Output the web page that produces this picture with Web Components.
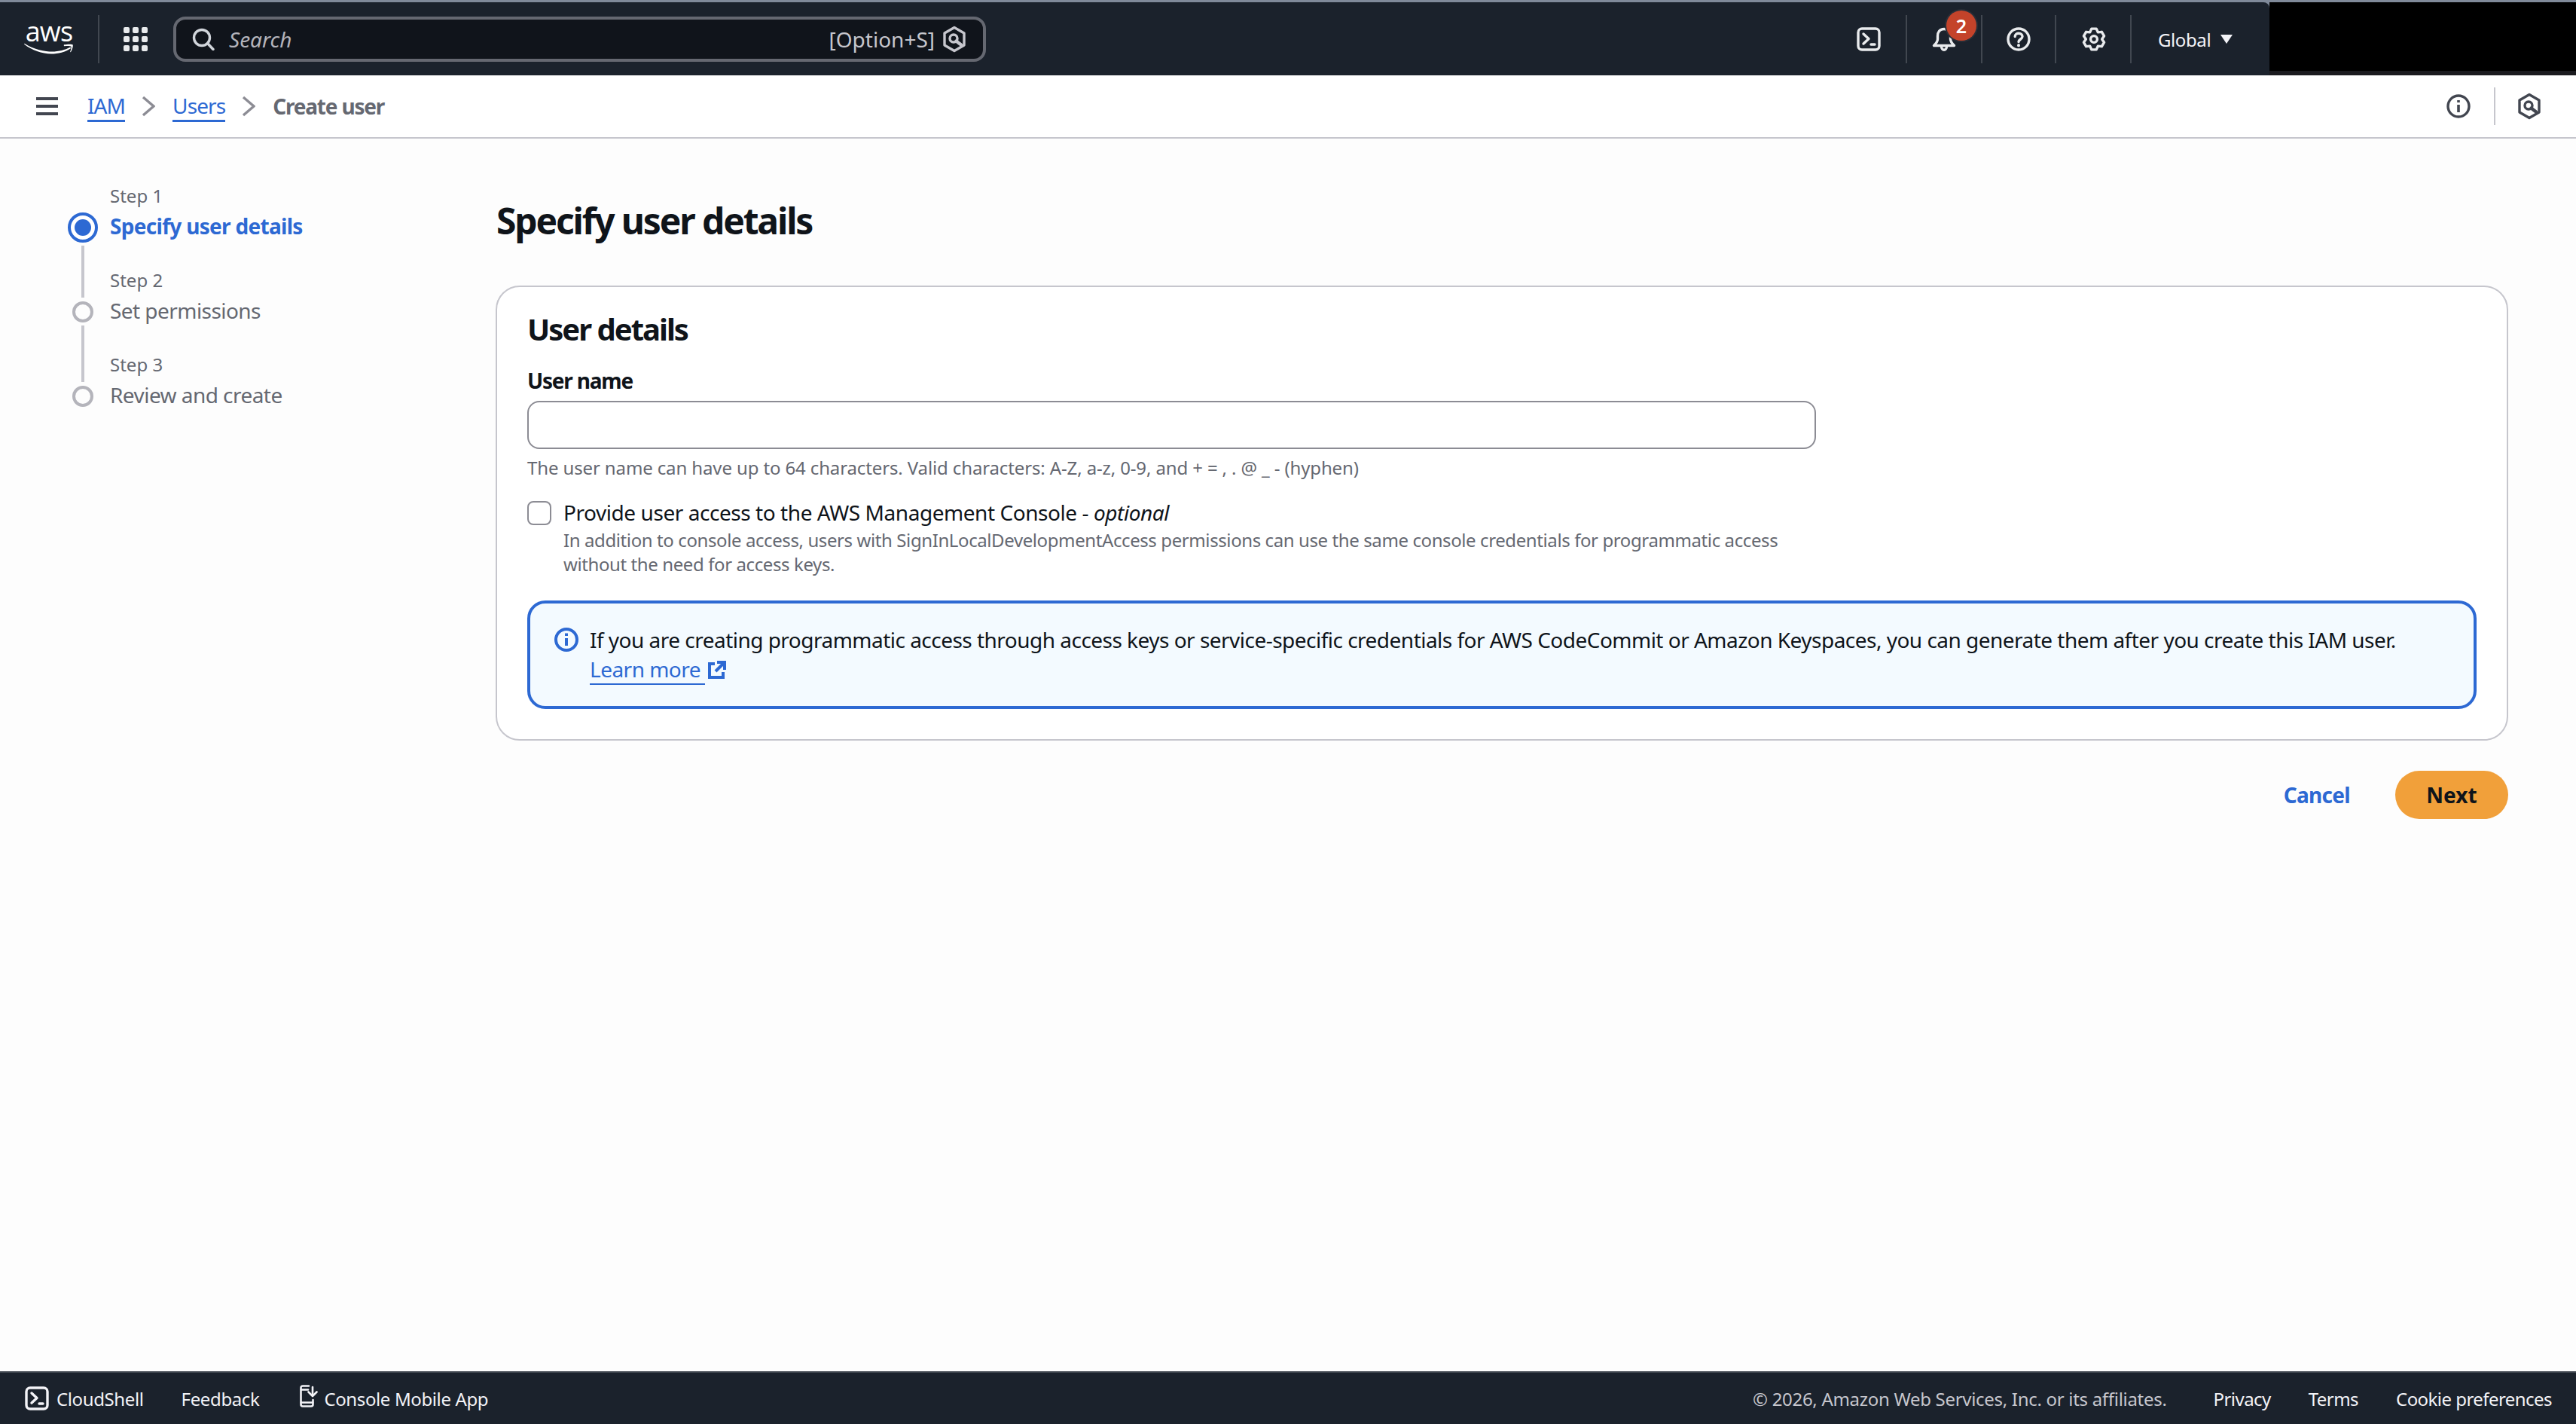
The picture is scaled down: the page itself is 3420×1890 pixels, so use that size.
<!DOCTYPE html>
<html lang="en">
<head>
<meta charset="utf-8">
<title>Create user</title>
<style>
  html, body { margin: 0; height: 100%; }
  body { width: 3420px; height: 1890px; overflow: hidden; display: flex; flex-direction: column; font-family: "Noto Sans", "Open Sans", sans-serif; color: #0f141a; background: #fdfdfd; }
</style>
</head>
<body>
<aws-topbar></aws-topbar>
<aws-subbar></aws-subbar>
<aws-page>
  <aws-steps slot="nav"></aws-steps>
  <aws-title>Specify user details</aws-title>
  <aws-card heading="User details">
    <aws-field label="User name" hint="The user name can have up to 64 characters. Valid characters: A-Z, a-z, 0-9, and + = , . @ _ - (hyphen)"></aws-field>
    <aws-check desc="In addition to console access, users with SignInLocalDevelopmentAccess permissions can use the same console credentials for programmatic access without the need for access keys.">Provide user access to the AWS Management Console - <em>optional</em></aws-check>
    <aws-alert link="Learn more">If you are creating programmatic access through access keys or service-specific credentials for AWS CodeCommit or Amazon Keyspaces, you can generate them after you create this IAM user.</aws-alert>
  </aws-card>
  <aws-actions></aws-actions>
</aws-page>
<aws-footer></aws-footer>

<script>
const FONT = '"Noto Sans", "Open Sans", sans-serif';
const hex = (c, sw) => `<svg width="32" height="36" viewBox="0 0 32 36" fill="none" stroke="${c}" stroke-width="${sw}" stroke-linejoin="round" stroke-linecap="round"><path d="M16 2.5 L29 10 V26 L16 33.5 L3 26 V10 Z"/><circle cx="15" cy="17" r="5"/><path d="M18.5 20.5 L25 25.5" stroke-width="4.4"/></svg>`;
const terminal = (s, c) => `<svg width="${s}" height="${s}" viewBox="0 0 32 32" fill="none" stroke="${c}" stroke-width="3.4" stroke-linecap="round" stroke-linejoin="round"><rect x="2" y="2" width="28" height="28" rx="5"/><path d="M9 9 L16 15.5 L9 22"/><path d="M19 23 H24"/></svg>`;
const gearPath = (() => {
  const pts = [];
  for (let i = 0; i < 6; i++) {
    const a = i * 60 - 90;
    [[10.6, -30], [14.2, -13], [14.2, 13], [10.6, 30]].forEach(([r, d]) => {
      const t = (a + d) * Math.PI / 180;
      pts.push((16 + r * Math.cos(t)).toFixed(2) + ' ' + (16 + r * Math.sin(t)).toFixed(2));
    });
  }
  return 'M' + pts.join(' L') + ' Z';
})();
function def(name, html) {
  customElements.define(name, class extends HTMLElement {
    constructor() {
      super();
      const root = this.attachShadow({ mode: 'open' });
      root.innerHTML = typeof html === 'function' ? html(this) : html;
    }
    connectedCallback() {
      if (typeof html === 'function') this.shadowRoot.innerHTML = html(this);
    }
  });
}

def('aws-topbar', `
<style>
  :host { display: flex; flex: none; height: 100px; box-sizing: border-box; background: #808a9a; padding-top: 3px; font-family: ${FONT}; }
  .bar { width: 3013px; background: #1b222c; border-top-right-radius: 8px; display: flex; align-items: center; padding: 1px 0 0 0; box-sizing: border-box; }
  .logo { display: flex; flex-direction: column; align-items: center; width: 66px; margin-left: 32px; color: #fff; }
  .logo span { font: 500 36px/24px "Open Sans", sans-serif; letter-spacing: -.8px; height: 26px; margin-top: -2px; }
  .logo svg { display: block; }
  .div { width: 2px; height: 64px; background: #414750; flex: none; }
  .logo + .div { margin-left: 32px; }
  .grid { margin-left: 32px; display: block; flex: none; }
  .search { margin-left: 34px; width: 1079px; height: 60px; box-sizing: border-box; border: 4px solid #656871; border-radius: 16px; background: #10141b; display: flex; align-items: center; padding: 0 22px 0 21px; color: #b4b4bb; flex: none; }
  .search svg { flex: none; display: block; }
  .ph { font-size: 28px; font-style: italic; margin-left: 19px; flex: 1; }
  .kbd { font-size: 28px; color: #c6c6cd; margin-right: 10px; }
  .right { margin-left: auto; display: flex; align-items: center; height: 100%; }
  .cell { height: 64px; box-sizing: border-box; display: flex; align-items: center; justify-content: center; position: relative; border-right: 2px solid #414750; flex: none; }
  .c1 { width: 100px; } .c2 { width: 100px; } .c3 { width: 98px; } .c4 { width: 100px; }
  .c4 svg { margin-left: 2px; }
  .badge { position: absolute; left: 52px; top: -6px; width: 40px; height: 40px; border-radius: 50%; background: #c4432a; box-shadow: 0 0 0 2px #2a2f38; color: #fff; font-size: 25px; font-weight: 600; line-height: 40px; text-align: center; }
  .global { width: 183px; padding-left: 35px; box-sizing: border-box; display: flex; align-items: center; color: #f3f3f7; font-size: 24px; font-weight: 400; letter-spacing: -.4px; flex: none; }
  .global svg { margin-left: 13px; }
  .black { flex: 1; background: linear-gradient(#000 0, #000 91px, #1b1b1f 91px); }
</style>
<div class="bar">
  <div class="logo"><span>aws</span><svg width="66" height="16" viewBox="0 0 66 16" fill="#fff"><path d="M1 2 C13 10 28 12.5 37 12.5 C46 12.5 55 10 60.5 7 C61.5 6.5 62.5 7.6 61.5 8.5 C55 13 45 15.5 36 15.5 C24 15.5 10 10.5 .5 3 C-.2 2.4 .3 1.5 1 2 Z"/><path d="M53 3.3 C56 2.7 63 2.2 64.5 3.2 C65.6 4.8 63.6 10.6 62 13 C61.6 13.5 61 13.2 61.2 12.6 C62 10.4 63 7 62.5 5.8 C61.5 4.8 57 5 53.5 5.2 C52.8 5.2 52.5 3.8 53 3.3 Z"/></svg></div>
  <div class="div"></div>
  <svg class="grid" width="32" height="32" viewBox="0 0 32 32" fill="#e9ebed"><rect x="0" y="0" width="8" height="8" rx="2"/><rect x="12" y="0" width="8" height="8" rx="2"/><rect x="24" y="0" width="8" height="8" rx="2"/><rect x="0" y="12" width="8" height="8" rx="2"/><rect x="12" y="12" width="8" height="8" rx="2"/><rect x="24" y="12" width="8" height="8" rx="2"/><rect x="0" y="24" width="8" height="8" rx="2"/><rect x="12" y="24" width="8" height="8" rx="2"/><rect x="24" y="24" width="8" height="8" rx="2"/></svg>
  <div class="search">
    <svg width="30" height="30" viewBox="0 0 30 30" fill="none" stroke="#d1d5db" stroke-width="3.4" stroke-linecap="round"><circle cx="13" cy="13" r="10.5"/><path d="M20.5 20.5 L28 28.5"/></svg>
    <span class="ph">Search</span>
    <span class="kbd">[Option+S]</span>
    ${hex('#c6c6cd', 3.4)}
  </div>
  <div class="right">
    <div class="cell c1">${terminal(32, '#e9ebed')}</div>
    <div class="cell c2">
      <svg width="32" height="32" viewBox="0 0 32 32" fill="none" stroke="#e9ebed" stroke-width="3.4" stroke-linejoin="round" stroke-linecap="round"><path d="M16 2.5 C10 2.5 7.5 7 7.5 12 V16 C7.5 19 5 22 2.5 24.5 H29.5 C27 22 24.5 19 24.5 16 V12 C24.5 7 22 2.5 16 2.5 Z"/><path d="M12.5 25 C12.5 32 19.5 32 19.5 25"/></svg>
      <div class="badge">2</div>
    </div>
    <div class="cell c3"><svg width="32" height="32" viewBox="0 0 32 32" fill="none" stroke="#e9ebed" stroke-width="3.4" stroke-linecap="round"><circle cx="16" cy="16" r="14"/><path d="M11.2 12.6 C11.2 6.6 21 7 21 12.6 C21 16 16 16 16 19.6"/><path d="M16 24 V24.4" stroke-width="3.8"/></svg></div>
    <div class="cell c4"><svg width="32" height="32" viewBox="0 0 32 32" fill="none" stroke="#e9ebed" stroke-width="3.4" stroke-linejoin="round"><path d="${gearPath}"/><circle cx="16" cy="16" r="4.4"/></svg></div>
    <div class="global">Global<svg width="16" height="12" viewBox="0 0 16 12" fill="#f3f3f7"><path d="M0 0 H16 L8 12 Z"/></svg></div>
  </div>
</div>
<div class="black"></div>
`);

def('aws-crumb', `
<style>
  :host { display: inline-block; color: #2d69d3; font-size: 28px; line-height: 40px; letter-spacing: -.9px; border-bottom: 3px solid #2d69d3; height: 39px; box-sizing: content-box; }
</style><slot></slot>`);

def('aws-subbar', `
<style>
  :host { display: flex; flex: none; align-items: center; height: 84px; box-sizing: border-box; border-bottom: 2px solid #c6c6cd; background: #fff; padding: 0 46px 0 48px; font-family: ${FONT}; }
  svg { display: block; flex: none; }
  .crumbs { display: flex; align-items: center; margin-left: 39px; }
  .chev { margin: 0 23px 0 22px; }
  .cur { font-size: 28px; font-weight: 700; color: #656871; line-height: 40px; letter-spacing: -1.2px; }
  .end { margin-left: auto; display: flex; align-items: center; }
  .div { width: 2px; height: 50px; background: #c6c6cd; margin: 0 29px 0 31px; }
</style>
<svg width="29" height="24" viewBox="0 0 29 24" fill="#424650"><rect width="29" height="4"/><rect y="10" width="29" height="4"/><rect y="20" width="29" height="4"/></svg>
<div class="crumbs">
  <aws-crumb>IAM</aws-crumb>
  <svg class="chev" width="18" height="28" viewBox="0 0 18 28" fill="none" stroke="#8c8c94" stroke-width="3.4"><path d="M2 2 L16 14 L2 26"/></svg>
  <aws-crumb>Users</aws-crumb>
  <svg class="chev" width="18" height="28" viewBox="0 0 18 28" fill="none" stroke="#8c8c94" stroke-width="3.4"><path d="M2 2 L16 14 L2 26"/></svg>
  <span class="cur">Create user</span>
</div>
<div class="end">
  <svg width="32" height="32" viewBox="0 0 32 32" fill="none" stroke="#424650" stroke-width="3.4"><circle cx="16" cy="16" r="14"/><path d="M16 14 V24" stroke-width="3.6"/><path d="M16 8 V11" stroke-width="3.6"/></svg>
  <div class="div"></div>
  ${hex('#424650', 3.4)}
</div>
`);

def('aws-page', `
<style>
  :host { display: flex; flex: 1; min-height: 0; box-sizing: border-box; padding: 58px 90px 0 90px; background: #fdfdfd; }
  .nav { width: 568px; flex: none; }
  .main { flex: 1; min-width: 0; padding-top: 21px; }
</style>
<div class="nav"><slot name="nav"></slot></div>
<div class="main"><slot></slot></div>
`);

def('aws-steps', `
<style>
  :host { display: grid; grid-template-columns: 40px auto; column-gap: 16px; grid-template-rows: 40px 40px 32px 40px 40px 32px 40px 40px; font-family: ${FONT}; justify-content: start; }
  .lab { grid-column: 2; font-size: 24px; line-height: 36px; color: #656871; white-space: nowrap; }
  .name { grid-column: 2; font-size: 28px; line-height: 36px; letter-spacing: -.55px; color: #656871; white-space: nowrap; }
  .active { color: #2d69d3; font-weight: 700; letter-spacing: -.7px; }
  .dot { grid-column: 1; align-self: center; justify-self: center; box-sizing: border-box; width: 28px; height: 28px; border: 4px solid #b4b4bb; border-radius: 50%; }
  .dot.on { width: 40px; height: 40px; border-color: #2d69d3; background: #fff; display: flex; align-items: center; justify-content: center; }
  .dot.on::after { content: ""; width: 22px; height: 22px; border-radius: 50%; background: #2d69d3; }
  .ln { grid-column: 1; justify-self: center; width: 4px; background: #c6c6cd; }
  .l1 { grid-row: 3 / 5; margin: 4px 0 -1px; }
  .l2 { grid-row: 6 / 8; margin: -2px 0 -1px; }
</style>
<div class="lab" style="grid-row:1">Step 1</div>
<div class="dot on" style="grid-row:2"></div><div class="name active" style="grid-row:2">Specify user details</div>
<div class="ln l1"></div>
<div class="lab" style="grid-row:4">Step 2</div>
<div class="dot" style="grid-row:5"></div><div class="name" style="grid-row:5">Set permissions</div>
<div class="ln l2"></div>
<div class="lab" style="grid-row:7">Step 3</div>
<div class="dot" style="grid-row:8"></div><div class="name" style="grid-row:8">Review and create</div>
`);

def('aws-title', `
<style>:host { display: block; font-family: ${FONT}; font-size: 48px; line-height: 60px; font-weight: 700; letter-spacing: -2.15px; color: #0f141a; margin: 0 0 56px 1px; }</style><slot></slot>`);

def('aws-card', (el) => `
<style>
  :host { display: block; box-sizing: border-box; border: 2px solid #c6c6cd; border-radius: 32px; background: #fff; padding: 32px 40px 40px; font-family: ${FONT}; }
  h2 { margin: 0 0 24px; font-size: 40px; line-height: 48px; font-weight: 700; letter-spacing: -2px; color: #0f141a; }
</style>
<h2>${el.getAttribute('heading') || ''}</h2>
<slot></slot>`);

def('aws-field', (el) => `
<style>
  :host { display: block; font-family: ${FONT}; }
  label { display: block; font-size: 28px; line-height: 40px; font-weight: 700; letter-spacing: -1.2px; color: #0f141a; margin-bottom: 7px; }
  input { display: block; box-sizing: border-box; width: 1711px; height: 64px; border: 2px solid #8c8c94; border-radius: 16px; background: #fff; padding: 0 20px; font: inherit; outline: none; }
  p { margin: 9px 0 0; font-size: 24px; line-height: 32px; letter-spacing: -.125px; color: #656871; }
</style>
<label for="i">${el.getAttribute('label') || ''}</label>
<input id="i" type="text">
<p>${el.getAttribute('hint') || ''}</p>`);

def('aws-check', (el) => `
<style>
  :host { display: grid; grid-template-columns: 32px 1fr; column-gap: 16px; margin-top: 24px; font-family: ${FONT}; }
  .box { box-sizing: border-box; width: 32px; height: 32px; border: 2px solid #8c8c94; border-radius: 8px; background: #fff; margin-top: 4px; }
  .lab { font-size: 28px; line-height: 39px; letter-spacing: -.44px; color: #0f141a; padding-bottom: 1px; }
  .desc { grid-column: 2; width: 1680px; font-size: 24px; line-height: 32px; letter-spacing: -.4px; color: #656871; }
</style>
<div class="box"></div>
<div class="lab"><slot></slot></div>
<div class="desc">${el.getAttribute('desc') || ''}</div>`);

def('aws-alert', (el) => `
<style>
  :host { display: flex; box-sizing: border-box; margin-top: 32px; border: 4px solid #2d69d3; border-radius: 24px; background: #f3faff; padding: 28px 32px 28px 32px; font-family: ${FONT}; font-size: 28px; line-height: 40px; letter-spacing: -.52px; color: #0f141a; }
  .ic { flex: none; width: 32px; height: 40px; margin-right: 15px; display: flex; align-items: center; }
  a { color: #2d69d3; text-decoration: none; display: inline-flex; align-items: flex-start; height: 40px; vertical-align: top; }
  a span { border-bottom: 2px solid #2d69d3; padding-right: 6px; line-height: 38px; height: 40px; box-sizing: border-box; }
  a svg { margin: 8px 0 0 4px; }
</style>
<div class="ic"><svg width="32" height="32" viewBox="0 0 32 32" fill="none" stroke="#2d69d3" stroke-width="4"><circle cx="16" cy="16" r="14"/><path d="M16 14 V24"/><path d="M16 7.5 V11"/></svg></div>
<div><slot></slot><br><a><span>${el.getAttribute('link') || ''}</span><svg width="24" height="24" viewBox="0 0 24 24" fill="none" stroke="#2d69d3" stroke-width="4"><path d="M9 4 H2 V22 H20 V15"/><path d="M10 14 L21 3"/><path d="M12 2 H22 V12"/></svg></a></div>`);

def('aws-actions', `
<style>
  :host { display: flex; justify-content: flex-end; align-items: center; margin-top: 40px; font-family: ${FONT}; font-size: 28px; font-weight: 700; }
  .cancel { color: #2d69d3; margin-right: 60px; letter-spacing: -.7px; }
  .next { height: 64px; width: 150px; box-sizing: border-box; border-radius: 32px; background: #f1a03a; color: #0f141a; display: flex; align-items: center; justify-content: center; }
</style>
<span class="cancel">Cancel</span><span class="next">Next</span>`);

def('aws-footer', `
<style>
  :host { display: flex; flex: none; align-items: center; height: 70px; box-sizing: border-box; border-top: 2px solid #414750; background: #1b222c; color: #f3f3f7; padding: 0 32px 0 33px; font-family: ${FONT}; font-size: 24px; letter-spacing: -.38px; }
  svg { display: block; flex: none; }
  .a { margin-left: 10px; }
  .f { margin-left: 50px; }
  .m { margin-left: 54px; margin-top: -6px; }
  .b { margin-left: 8px; }
  .end { margin-left: auto; display: flex; align-items: center; letter-spacing: -.55px; }
  .copy { color: #c6c6cd; margin-right: 62px; letter-spacing: -.3px; }
  .end span + span { margin-left: 50px; }
  .copy + span { margin-left: 0 !important; }
</style>
${terminal(32, '#f3f3f7')}
<span class="a">CloudShell</span>
<span class="f">Feedback</span>
<svg class="m" width="24" height="30" viewBox="0 0 24 30" fill="none" stroke="#f3f3f7" stroke-width="2.6" stroke-linejoin="round" stroke-linecap="round"><path d="M12 1.5 H4 Q1.5 1.5 1.5 4 V26 Q1.5 28.5 4 28.5 H15 Q17.5 28.5 17.5 26 V20"/><path d="M2 6.5 H11"/><path d="M2 23.5 H17"/><path d="M17 3 V14"/><path d="M11.5 9.5 L17 15 L22.5 9.5"/></svg>
<span class="b">Console Mobile App</span>
<div class="end"><span class="copy">© 2026, Amazon Web Services, Inc. or its affiliates.</span><span>Privacy</span><span>Terms</span><span>Cookie preferences</span></div>
`);
</script>
</body>
</html>
